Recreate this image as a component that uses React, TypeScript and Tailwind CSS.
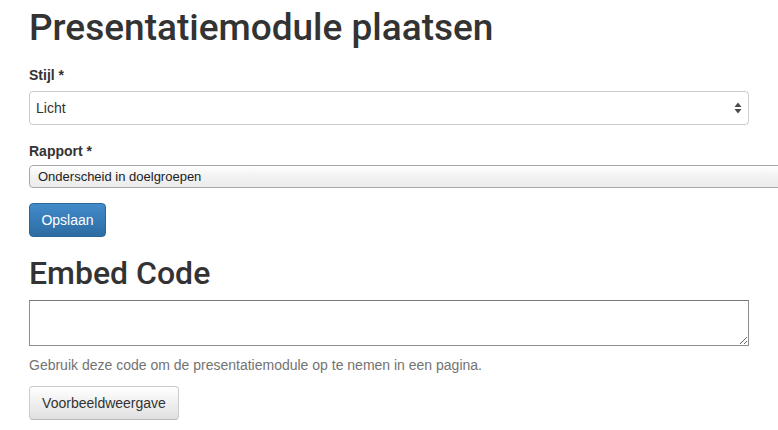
import React from 'react';

const font = { fontFamily: '"Liberation Sans", Arial, sans-serif' };
const headingFont = { fontFamily: 'Roboto, "Liberation Sans", Arial, sans-serif' };

const SelectArrows: React.FC = () => (
  <svg
    className="pointer-events-none absolute right-[7px] top-[11px]"
    width="8"
    height="12"
    viewBox="0 0 8 12"
  >
    <path d="M4 0.5 L7.5 5 L0.5 5 Z" fill="#4a4a4a" />
    <path d="M4 11.5 L7.5 7 L0.5 7 Z" fill="#4a4a4a" />
  </svg>
);

export default function App() {
  return (
    <div className="w-[778px] h-[430px] overflow-hidden bg-white text-[#333]" style={font}>
      <div className="px-[29px]">
        {/* Title */}
        <h1 className="mt-[8px] text-[37px] leading-[40px] font-medium" style={headingFont}>
          Presentatiemodule plaatsen
        </h1>

        {/* Stijl */}
        <label className="block mt-[17px] text-[14px] leading-[20px] font-bold">Stijl *</label>
        <div className="relative mt-[6px] w-[720px]">
          <select
            defaultValue="licht"
            className="block w-full h-[34px] appearance-none rounded-[4px] border border-[#cccccc] bg-white pl-[6px] text-[14px] text-[#333] outline-none"
            style={font}
          >
            <option value="licht">Licht</option>
            <option value="donker">Donker</option>
          </select>
          <SelectArrows />
        </div>

        {/* Rapport */}
        <label className="block mt-[16px] text-[14px] leading-[20px] font-bold">Rapport *</label>
        <div className="mt-[4px] w-[800px]">
          <select
            defaultValue="doel"
            className="block w-full h-[23px] appearance-none rounded-l-[4px] border border-[#a8a8a8] bg-gradient-to-b from-white via-[#f2f2f2] to-[#ececec] pl-[8px] text-[13px] text-[#222] outline-none"
            style={font}
          >
            <option value="doel">Onderscheid in doelgroepen</option>
          </select>
        </div>

        {/* Opslaan */}
        <button
          className="mt-[15px] block h-[34px] w-[77px] rounded-[4px] border border-[#2b669a] bg-gradient-to-b from-[#428bca] to-[#2d6ca2] text-[14px] text-white"
          style={font}
        >
          Opslaan
        </button>

        {/* Embed code */}
        <h2 className="mt-[19px] text-[32px] leading-[34px] font-medium" style={headingFont}>
          Embed Code
        </h2>
        <textarea
          className="mt-[10px] block h-[46px] w-[720px] resize-y border border-[#8e8e8e] border-t-[#777] bg-white outline-none"
        />
        <p className="mt-[9px] text-[14px] leading-[20px] text-[#737373]">
          Gebruik deze code om de presentatiemodule op te nemen in een pagina.
        </p>
        <button
          className="mt-[11px] block h-[34px] w-[150px] rounded-[4px] border border-[#cccccc] border-b-[#b8b8b8] bg-gradient-to-b from-white to-[#e0e0e0] text-[14px] text-[#333]"
          style={font}
        >
          Voorbeeldweergave
        </button>
      </div>
    </div>
  );
}
